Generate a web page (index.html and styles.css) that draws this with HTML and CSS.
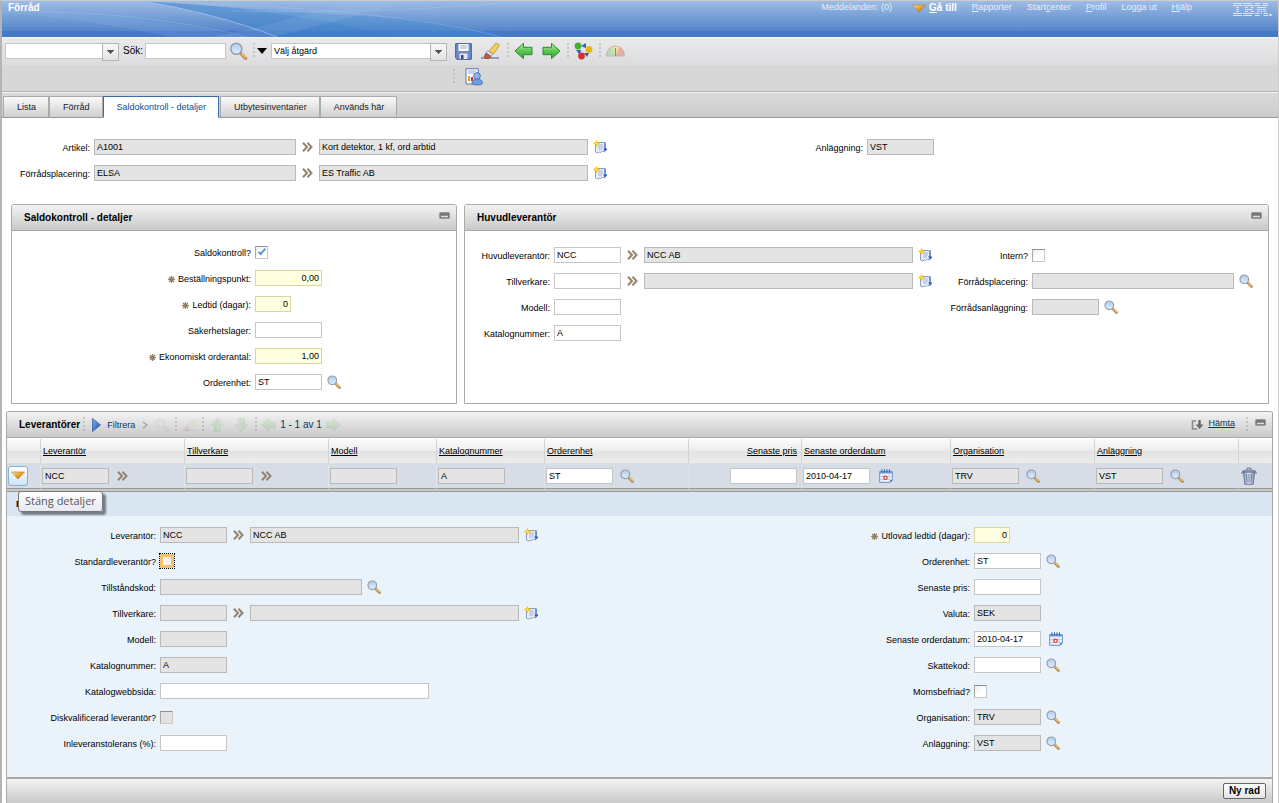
FILE: index.html
```html
<!DOCTYPE html>
<html lang="sv">
<head>
<meta charset="utf-8">
<title>Förråd</title>
<link rel="stylesheet" href="styles.css">
</head>
<body>
<svg class="defs" aria-hidden="true">
  <defs>
    <linearGradient id="g-gold" x1="0" y1="0" x2="1" y2="1"><stop offset="0" stop-color="#fbe3a6"/><stop offset=".5" stop-color="#e9a12c"/><stop offset="1" stop-color="#a9640b"/></linearGradient>
    <linearGradient id="g-green" x1="0" y1="0" x2="0" y2="1"><stop offset="0" stop-color="#b6efa0"/><stop offset=".5" stop-color="#5cc653"/><stop offset="1" stop-color="#37a035"/></linearGradient>
    <linearGradient id="g-lens" x1="0" y1="0" x2="0" y2="1"><stop offset="0" stop-color="#a9cdf2"/><stop offset="1" stop-color="#e2f1fd"/></linearGradient>
    <linearGradient id="g-blue" x1="0" y1="0" x2="1" y2="1"><stop offset="0" stop-color="#7fb0ee"/><stop offset="1" stop-color="#1c4fa6"/></linearGradient>
    <linearGradient id="g-trash" x1="0" y1="0" x2="1" y2="0"><stop offset="0" stop-color="#8d9cba"/><stop offset=".5" stop-color="#dfe6f2"/><stop offset="1" stop-color="#8391b0"/></linearGradient>
  </defs>
  <symbol id="i-chev" viewBox="0 0 11 10"><path d="M1 .8 5 5 1 9.200M5.500.8 9.500 5 5.500 9.200" fill="none" stroke="#93836f" stroke-width="2"/></symbol>
  <symbol id="i-lens" viewBox="0 0 14 14"><path d="m9 9 3.500 3.500" stroke="#a98252" stroke-width="2.600" stroke-linecap="round"/><path d="m9.500 9 3 2.800" stroke="#f3c06c" stroke-width="1.500" stroke-linecap="round"/><circle cx="5.300" cy="5.300" r="4.300" fill="url(#g-lens)" stroke="#9a9fa6" stroke-width="1.200"/></symbol>
  <symbol id="i-list" viewBox="0 0 14 14"><path d="M2.500 2.500h9V12l-2-1L8 12.500 6.500 12l-2 1-2-1z" fill="#e9eefa" stroke="#8b9dc7"/><path d="M5 5h5M5 7h5M5 9h4" stroke="#a3b3d8"/><path d="M12.300 2.500v7" stroke="#5f82c8" stroke-width="1.200"/><path d="M10 8.500h4.500l-2.200 3z" fill="#2f5fc0"/><path d="M3.500 0 4.700 2.300 7 3.500 4.700 4.700 3.500 7 2.300 4.700 0 3.500 2.300 2.300z" fill="#f5c500"/><circle cx="3.500" cy="3.500" r="1" fill="#fff07a"/></symbol>
  <symbol id="i-cal" viewBox="0 0 14 14"><path d="M.7 2.500h12.600V11l-2 2.300H.7z" fill="#f3f7ff" stroke="#6d8cc2"/><path d="M1 2h12v2.500H1z" fill="#6f99d8"/><path d="M3 .3v3M5.500.3v3M8 .3v3M10.500.3v3" stroke="#2f5ea8"/><path d="M1 7.500h12M1 10.500h12M4 4.500V13M10 4.500V13" stroke="#b7c7e4" stroke-width=".8"/><circle cx="6.500" cy="8.800" r="1.700" fill="#fff" stroke="#d43a2a" stroke-width="1.200"/><path d="M13.300 11h-2v2.300z" fill="#3f5f96"/></symbol>
  <symbol id="i-req" viewBox="0 0 7 7"><circle cx="3.500" cy="3.500" r="2.200" fill="#94805f"/><path d="M3.500 0v7M0 3.500h7M1 1l5 5M6 1 1 6" stroke="#94805f" stroke-width="1.100"/></symbol>
  <symbol id="i-min" viewBox="0 0 11 7"><rect x=".5" y=".5" width="10" height="6" rx="1" fill="#777" stroke="#999"/><path d="M2 4.500h7" stroke="#ddd" stroke-width="1.500"/></symbol>
  <symbol id="i-down" viewBox="0 0 14 9"><path d="M.5 1h13L7 8z" fill="url(#g-gold)" stroke="#b7792a" stroke-width=".6"/></symbol>
  <symbol id="i-left" viewBox="0 0 19 17"><path d="M1 8.500 9.500.8v4H18v7.400H9.500v4z" fill="url(#g-green)" stroke="#2b8a2c"/></symbol>
  <symbol id="i-sep" viewBox="0 0 2 16"><path d="M1 0v16" stroke="#a5a5a5" stroke-dasharray="2 2"/></symbol>
  <symbol id="i-save" viewBox="0 0 17 17"><path d="M.7.700h15.600v15.600H2L.7 15z" fill="#6f8cc9" stroke="#3a5596"/><path d="M3.500 1h10v7h-10z" fill="#f7f8fc"/><path d="M5 3h7M5 5h7" stroke="#aab"/><path d="M4.500 10.500h8V16h-8z" fill="#dfe4ee"/><path d="M6 12h2.500v4H6z" fill="#3a4a72"/></symbol>
  <symbol id="i-erase" viewBox="0 0 19 18"><path d="M0 16h18" stroke="#5d6f9c" stroke-width="1.200"/><path d="m8 9 7-8 3.500 2-6 9z" fill="#f5cf4d" stroke="#b08a2b" stroke-width=".7"/><path d="m6.500 8.500 5 3.500-1.500 2.500-5-3.500z" fill="#dde6f5" stroke="#7f93bd" stroke-width=".7"/><path d="m5 11 5 3.500-2 2H4.500L3 15z" fill="#c35a3c" stroke="#8a3a25" stroke-width=".7"/></symbol>
  <symbol id="i-flow" viewBox="0 0 19 18"><path d="m7 4 5-3v5zM2 8h5l-1 5zM10 11l5 0-2 4z" fill="#2f5fae"/><circle cx="4" cy="4" r="3.400" fill="#3faf35"/><circle cx="15" cy="7.500" r="3.400" fill="#e8b90c"/><circle cx="7.500" cy="14" r="3.400" fill="#d4312c"/></symbol>
  <symbol id="i-gauge" viewBox="0 0 19 12"><path d="M.5 11a9 9.500 0 0 1 5-9L9.500 11z" fill="#b9dcb3"/><path d="M5.500 2a9 9 0 0 1 8 0L9.500 11z" fill="#efe2a8"/><path d="M13.500 2a9 9.500 0 0 1 5 9h-9z" fill="#ecaaa6"/><path d="M.5 11a9 10 0 0 1 18 0z" fill="none" stroke="#bcb6ac"/><path d="M9.500 3v8" stroke="#8f8878" stroke-width="1.200"/></symbol>
  <symbol id="i-report" viewBox="0 0 18 18"><path d="M1 .7h12.300V16H1z" fill="#fafbff" stroke="#5c76ad"/><path d="M3 3h8M3 5h6" stroke="#9aa9cc"/><path d="M4 8v5" stroke="#e59b1c" stroke-width="2"/><path d="M7 9v4" stroke="#cf2f2a" stroke-width="2"/><circle cx="12" cy="8" r="3.400" fill="#8eb5e6" stroke="#3f6aa8" stroke-width=".8"/><path d="M7 15.500c0-4 3-4.500 5-4.500s5.500.5 5.500 4.500c-2 2-8.500 2-10.500 0z" fill="#6f9fdb" stroke="#3f6aa8" stroke-width=".8"/></symbol>
  <symbol id="i-play" viewBox="0 0 9 14"><path d="M.5.5v13L8.500 7z" fill="url(#g-blue)" stroke="#2a57a5" stroke-width=".7"/></symbol>
  <symbol id="i-fetch" viewBox="0 0 13 11"><path d="M5 2H1.500v8H6" fill="none" stroke="#8a8a8a" stroke-width="1.600"/><path d="M8.500 1v6" stroke="#686868" stroke-width="2.400"/><path d="M4.800 5.500h7.600L8.600 10z" fill="#686868"/></symbol>
  <symbol id="i-trash" viewBox="0 0 16 18"><path d="M2.500 5h11l-1.300 12.300H3.800z" fill="url(#g-trash)" stroke="#5f6e8e" stroke-width=".9"/><path d="M5.500 7l.5 8.500M8 7v8.500M10.500 7 10 15.500" stroke="#6f7e9e"/><path d="M1 4.800C2 2.500 14 2.500 15 4.800z" fill="#b9c4d9" stroke="#5f6e8e" stroke-width=".9"/><path d="M6 2.800V1.200h4v1.600M1 5v2M15 5v2" fill="none" stroke="#5f6e8e"/></symbol>
  <symbol id="i-ibm" viewBox="0 0 39 14">
    <g stroke="#dce7f6" stroke-width="1">
      <path d="M0 .5h9M0 2.500h9M3 4.500h3M3 6.500h3M3 8.500h3M0 10.500h9M0 12.500h9"/>
      <path d="M10 .5h9M10 2.500h11M12 4.500h3M17.500 4.500h3M12 6.500h8M12 8.500h3M17.500 8.500h3.500M10 10.500h11M10 12.500h9"/>
      <path d="M22 .5h5M30 .5h5M22 2.500h5.500M29.500 2.500H35M24 4.500h9M24 6.500h3M27.500 6.500h2M30 6.500h3M24 8.500h2.500M27.500 8.500h2M30.500 8.500h2.500M22 10.500h4.500M28 10.500h1M30.500 10.500H35M22 12.500h4.500M30.500 12.500H35"/>
    </g>
    <circle cx="37.500" cy="12" r="1.300" fill="#dce7f6"/>
  </symbol>
</svg>

<div class="page">
  <header class="banner">
    <svg class="swoosh" viewBox="0 0 500 36" aria-hidden="true">
      <path d="M138 0C180 6 235 20 275 36H500C460 24 420 18 340 14 270 10 200 4 138 0z" fill="#3f8fd0" opacity=".35"/>
      <path d="M138 0C180 6 235 20 275 36H390C330 18 230 4 138 0z" fill="#3f7cc6" opacity=".3"/>
      <path d="M0 12C100 12 180 22 240 36H170C110 24 60 16 0 12z" fill="#8ab4e6" opacity=".2"/>
      <path d="M210 36C270 24 310 12 345 0h60C360 14 310 26 270 36z" fill="#a6c8ee" opacity=".15"/>
      <path d="M138 0C180 6 235 20 275 36" fill="none" stroke="#b4d2f3" opacity=".6"/>
      <path d="M138 0C250 4 400 10 500 36M0 11C100 9 180 20 245 36M230 10C320 12 400 10 500 2" fill="none" stroke="#a9cdf2" opacity=".3"/>
    </svg>
    <h1 class="app-title">Förråd</h1>
    <nav class="nav">
      <span class="messages">Meddelanden: (0)</span>
      <a class="goto" href="#"><svg class="i-14x9"><use href="#i-down"/></svg><span><u>G</u>å till</span></a>
      <a href="#"><u>R</u>apporter</a>
      <a href="#">Start<u>c</u>enter</a>
      <a href="#"><u>P</u>rofil</a>
      <a href="#">Logga ut</a>
      <a href="#"><u>H</u>jälp</a>
      <svg class="ibm" role="img" aria-label="IBM"><use href="#i-ibm"/></svg>
    </nav>
  </header>

  <div class="toolbar">
    <div class="tool-row">
      <span class="combo combo-query"><select aria-label="Fråga"><option></option></select></span>
      <label class="search-label" for="search">Sök:</label>
      <input class="field search" id="search" type="text">
      <button class="tool lens" aria-label="Sök"><svg class="i-19"><use href="#i-lens"/></svg></button>
      <svg class="sep"><use href="#i-sep"/></svg>
      <button class="tool caret" aria-label="Sökmeny"></button>
      <span class="combo combo-action"><select aria-label="Åtgärd"><option>Välj åtgärd</option></select></span>
      <button class="tool save" aria-label="Spara"><svg class="i-17"><use href="#i-save"/></svg></button>
      <button class="tool erase" aria-label="Rensa"><svg class="i-19"><use href="#i-erase"/></svg></button>
      <svg class="sep"><use href="#i-sep"/></svg>
      <button class="tool" aria-label="Föregående"><svg class="i-19"><use href="#i-left"/></svg></button>
      <button class="tool next" aria-label="Nästa"><svg class="i-19 flip"><use href="#i-left"/></svg></button>
      <svg class="sep"><use href="#i-sep"/></svg>
      <button class="tool" aria-label="Arbetsflöde"><svg class="i-19"><use href="#i-flow"/></svg></button>
      <svg class="sep"><use href="#i-sep"/></svg>
      <button class="tool" aria-label="Nyckeltal"><svg class="i-19"><use href="#i-gauge"/></svg></button>
    </div>
    <div class="tool-row second">
      <svg class="sep"><use href="#i-sep"/></svg>
      <button class="tool" aria-label="Rapporter"><svg class="i-18"><use href="#i-report"/></svg></button>
    </div>
  </div>

  <div class="tabs" role="tablist">
    <button class="tab" role="tab">Lista</button>
    <button class="tab" role="tab">Förråd</button>
    <button class="tab active" role="tab" aria-selected="true">Saldokontroll - detaljer</button>
    <button class="tab" role="tab">Utbytesinventarier</button>
    <button class="tab" role="tab">Används här</button>
  </div>

  <main>
    <section class="head-form">
      <div class="form head-left">
        <div class="row"><label for="artikel">Artikel:</label>
          <div class="ctl"><input class="field md ro" id="artikel" value="A1001" readonly><button class="chev" aria-label="Detaljer"><svg><use href="#i-chev"/></svg></button><input class="field lg ro" aria-label="Artikelbeskrivning" value="Kort detektor, 1 kf, ord arbtid" readonly><button class="ico" aria-label="Lång beskrivning"><svg><use href="#i-list"/></svg></button></div></div>
        <div class="row"><label for="placering">Förrådsplacering:</label>
          <div class="ctl"><input class="field md ro" id="placering" value="ELSA" readonly><button class="chev" aria-label="Detaljer"><svg><use href="#i-chev"/></svg></button><input class="field lg ro" aria-label="Placeringsbeskrivning" value="ES Traffic AB" readonly><button class="ico" aria-label="Lång beskrivning"><svg><use href="#i-list"/></svg></button></div></div>
      </div>
      <div class="form head-right">
        <div class="row"><label for="anl">Anläggning:</label><div class="ctl"><input class="field sm ro" id="anl" value="VST" readonly></div></div>
      </div>
    </section>

    <div class="panels">
      <section class="panel">
        <div class="panel-head"><h2>Saldokontroll - detaljer</h2><button class="min" aria-label="Minimera"><svg><use href="#i-min"/></svg></button></div>
        <div class="form balance">
          <div class="row"><label for="saldo">Saldokontroll?</label><div class="ctl"><input class="check" type="checkbox" id="saldo" checked></div></div>
          <div class="row"><label for="bp"><svg class="req"><use href="#i-req"/></svg>Beställningspunkt:</label><div class="ctl"><input class="field sm must" id="bp" value="0,00"></div></div>
          <div class="row"><label for="lt"><svg class="req"><use href="#i-req"/></svg>Ledtid (dagar):</label><div class="ctl"><input class="field xs must" id="lt" value="0"></div></div>
          <div class="row"><label for="sl">Säkerhetslager:</label><div class="ctl"><input class="field sm" id="sl"></div></div>
          <div class="row"><label for="eo"><svg class="req"><use href="#i-req"/></svg>Ekonomiskt orderantal:</label><div class="ctl"><input class="field sm must" id="eo" value="1,00"></div></div>
          <div class="row"><label for="oe">Orderenhet:</label><div class="ctl"><input class="field sm" id="oe" value="ST"><button class="ico" aria-label="Välj värde"><svg><use href="#i-lens"/></svg></button></div></div>
        </div>
      </section>
      <section class="panel">
        <div class="panel-head"><h2>Huvudleverantör</h2><button class="min" aria-label="Minimera"><svg><use href="#i-min"/></svg></button></div>
        <div class="supplier">
          <div class="form sup-left">
            <div class="row"><label for="hl">Huvudleverantör:</label><div class="ctl"><input class="field sm" id="hl" value="NCC"><button class="chev" aria-label="Detaljer"><svg><use href="#i-chev"/></svg></button><input class="field lg ro" aria-label="Leverantörsnamn" value="NCC AB" readonly><button class="ico" aria-label="Lång beskrivning"><svg><use href="#i-list"/></svg></button></div></div>
            <div class="row"><label for="tv">Tillverkare:</label><div class="ctl"><input class="field sm" id="tv"><button class="chev" aria-label="Detaljer"><svg><use href="#i-chev"/></svg></button><input class="field lg ro" aria-label="Tillverkarnamn" readonly><button class="ico" aria-label="Lång beskrivning"><svg><use href="#i-list"/></svg></button></div></div>
            <div class="row"><label for="mo">Modell:</label><div class="ctl"><input class="field sm" id="mo"></div></div>
            <div class="row"><label for="kn">Katalognummer:</label><div class="ctl"><input class="field sm" id="kn" value="A"></div></div>
          </div>
          <div class="form sup-right">
            <div class="row"><label for="intern">Intern?</label><div class="ctl"><input class="check" type="checkbox" id="intern"></div></div>
            <div class="row"><label for="fp">Förrådsplacering:</label><div class="ctl"><input class="field md ro" id="fp" readonly><button class="ico" aria-label="Välj värde"><svg><use href="#i-lens"/></svg></button></div></div>
            <div class="row"><label for="fa">Förrådsanläggning:</label><div class="ctl"><input class="field sm ro" id="fa" readonly><button class="ico" aria-label="Välj värde"><svg><use href="#i-lens"/></svg></button></div></div>
          </div>
        </div>
      </section>
    </div>

    <section class="vendors">
      <div class="panel-head vendors-head">
        <h2>Leverantörer</h2>
        <svg class="sep"><use href="#i-sep"/></svg>
        <button class="filter"><svg class="play"><use href="#i-play"/></svg>Filtrera</button>
        <svg class="mini-chev" viewBox="0 0 6 8"><path d="m1 1 4 3-4 3" fill="none" stroke="#a9a698" stroke-width="1.500"/></svg>
        <button class="faint" disabled aria-label="Sök"><svg><use href="#i-lens"/></svg></button>
        <svg class="sep"><use href="#i-sep"/></svg>
        <button class="faint" disabled aria-label="Rensa"><svg><use href="#i-erase"/></svg></button>
        <svg class="sep"><use href="#i-sep"/></svg>
        <button class="faint up" disabled aria-label="Föregående rad"><svg><use href="#i-left"/></svg></button>
        <button class="faint down" disabled aria-label="Nästa rad"><svg><use href="#i-left"/></svg></button>
        <svg class="sep"><use href="#i-sep"/></svg>
        <button class="faint page-btn" disabled aria-label="Föregående sida"><svg><use href="#i-left"/></svg></button>
        <span class="count">1 - 1 av 1</span>
        <button class="faint page-btn" disabled aria-label="Nästa sida"><svg class="flip"><use href="#i-left"/></svg></button>
        <span class="grow"></span>
        <a class="fetch" href="#"><svg><use href="#i-fetch"/></svg><u>Hämta</u></a>
        <svg class="sep"><use href="#i-sep"/></svg>
        <button class="min" aria-label="Minimera"><svg><use href="#i-min"/></svg></button>
      </div>
      <table class="grid">
        <colgroup><col class="c33"><col class="c144"><col class="c144"><col class="c108"><col class="c108"><col class="c144"><col class="c113"><col class="c149"><col class="c144"><col class="c144"><col class="c34"></colgroup>
        <thead><tr><th></th><th><a href="#">Leverantör</a></th><th><a href="#">Tillverkare</a></th><th><a href="#">Modell</a></th><th><a href="#">Katalognummer</a></th><th><a href="#">Orderenhet</a></th><th class="num"><a href="#">Senaste pris</a></th><th><a href="#">Senaste orderdatum</a></th><th><a href="#">Organisation</a></th><th><a href="#">Anläggning</a></th><th></th></tr></thead>
        <tbody><tr>
          <td class="toggle-cell"><div class="toggle-wrap"><button class="toggle" aria-label="Stäng detaljer"><svg class="i-14x9"><use href="#i-down"/></svg></button><div class="tooltip" role="tooltip">Stäng detaljer</div></div></td>
          <td><div class="ctl"><input class="field sm ro" aria-label="Leverantör" value="NCC" readonly><button class="chev" aria-label="Detaljer"><svg><use href="#i-chev"/></svg></button></div></td>
          <td><div class="ctl"><input class="field sm ro" aria-label="Tillverkare" readonly><button class="chev" aria-label="Detaljer"><svg><use href="#i-chev"/></svg></button></div></td>
          <td><div class="ctl"><input class="field sm ro" aria-label="Modell" readonly></div></td>
          <td><div class="ctl"><input class="field sm ro" aria-label="Katalognummer" value="A" readonly></div></td>
          <td><div class="ctl"><input class="field sm" aria-label="Orderenhet" value="ST"><button class="ico" aria-label="Välj värde"><svg><use href="#i-lens"/></svg></button></div></td>
          <td><div class="ctl end"><input class="field sm" aria-label="Senaste pris"></div></td>
          <td><div class="ctl"><input class="field sm" aria-label="Senaste orderdatum" value="2010-04-17"><button class="ico cal" aria-label="Välj datum"><svg><use href="#i-cal"/></svg></button></div></td>
          <td><div class="ctl"><input class="field sm ro" aria-label="Organisation" value="TRV" readonly><button class="ico" aria-label="Välj värde"><svg><use href="#i-lens"/></svg></button></div></td>
          <td><div class="ctl"><input class="field sm ro" aria-label="Anläggning" value="VST" readonly><button class="ico" aria-label="Välj värde"><svg><use href="#i-lens"/></svg></button></div></td>
          <td><button class="trash" aria-label="Ta bort rad"><svg><use href="#i-trash"/></svg></button></td>
        </tr></tbody>
      </table>
      <div class="detail">
        <h3>Detaljer</h3>
        <div class="detail-cols">
          <div class="form det-left">
            <div class="row"><label for="d1">Leverantör:</label><div class="ctl"><input class="field sm ro" id="d1" value="NCC" readonly><button class="chev" aria-label="Detaljer"><svg><use href="#i-chev"/></svg></button><input class="field lg ro" aria-label="Leverantörsnamn" value="NCC AB" readonly><button class="ico" aria-label="Lång beskrivning"><svg><use href="#i-list"/></svg></button></div></div>
            <div class="row"><label for="d2">Standardleverantör?</label><div class="ctl"><input class="check hot" type="checkbox" id="d2"></div></div>
            <div class="row"><label for="d3">Tillståndskod:</label><div class="ctl"><input class="field md ro" id="d3" readonly><button class="ico" aria-label="Välj värde"><svg><use href="#i-lens"/></svg></button></div></div>
            <div class="row"><label for="d4">Tillverkare:</label><div class="ctl"><input class="field sm ro" id="d4" readonly><button class="chev" aria-label="Detaljer"><svg><use href="#i-chev"/></svg></button><input class="field lg ro" aria-label="Tillverkarnamn" readonly><button class="ico" aria-label="Lång beskrivning"><svg><use href="#i-list"/></svg></button></div></div>
            <div class="row"><label for="d5">Modell:</label><div class="ctl"><input class="field sm ro" id="d5" readonly></div></div>
            <div class="row"><label for="d6">Katalognummer:</label><div class="ctl"><input class="field sm ro" id="d6" value="A" readonly></div></div>
            <div class="row"><label for="d7">Katalogwebbsida:</label><div class="ctl"><input class="field lg" id="d7"></div></div>
            <div class="row"><label for="d8">Diskvalificerad leverantör?</label><div class="ctl"><input class="check off" type="checkbox" id="d8" disabled></div></div>
            <div class="row"><label for="d9">Inleveranstolerans (%):</label><div class="ctl"><input class="field sm" id="d9"></div></div>
          </div>
          <div class="form det-right">
            <div class="row"><label for="e1"><svg class="req"><use href="#i-req"/></svg>Utlovad ledtid (dagar):</label><div class="ctl"><input class="field xs must" id="e1" value="0"></div></div>
            <div class="row"><label for="e2">Orderenhet:</label><div class="ctl"><input class="field sm" id="e2" value="ST"><button class="ico" aria-label="Välj värde"><svg><use href="#i-lens"/></svg></button></div></div>
            <div class="row"><label for="e3">Senaste pris:</label><div class="ctl"><input class="field sm" id="e3"></div></div>
            <div class="row"><label for="e4">Valuta:</label><div class="ctl"><input class="field sm ro" id="e4" value="SEK" readonly></div></div>
            <div class="row"><label for="e5">Senaste orderdatum:</label><div class="ctl"><input class="field sm" id="e5" value="2010-04-17"><button class="ico cal" aria-label="Välj datum"><svg><use href="#i-cal"/></svg></button></div></div>
            <div class="row"><label for="e6">Skattekod:</label><div class="ctl"><input class="field sm" id="e6"><button class="ico" aria-label="Välj värde"><svg><use href="#i-lens"/></svg></button></div></div>
            <div class="row"><label for="e7">Momsbefriad?</label><div class="ctl"><input class="check" type="checkbox" id="e7"></div></div>
            <div class="row"><label for="e8">Organisation:</label><div class="ctl"><input class="field sm ro" id="e8" value="TRV" readonly><button class="ico" aria-label="Välj värde"><svg><use href="#i-lens"/></svg></button></div></div>
            <div class="row"><label for="e9">Anläggning:</label><div class="ctl"><input class="field sm ro" id="e9" value="VST" readonly><button class="ico" aria-label="Välj värde"><svg><use href="#i-lens"/></svg></button></div></div>
          </div>
        </div>
      </div>
      <div class="vendors-foot"><button class="new-row">Ny rad</button></div>
    </section>
  </main>
</div>
</body>
</html>
```
FILE: styles.css
```css
* { box-sizing: border-box; }
body, h1, h2, h3 { margin: 0; }
body, input, select, button {
  font-family: "Liberation Sans", Arial, sans-serif;
  font-size: 9px;
  line-height: 12px;
  color: #000;
}
body { background: #fff; }
button { padding: 0; border: 0; background: none; flex: none; }
svg { display: block; flex: none; overflow: visible; }
.defs { position: absolute; width: 0; height: 0; }
.page {
  display: flex;
  flex-direction: column;
  min-height: 100vh;
  border: solid #ccc;
  border-width: 1px 1px 0 2px;
  border-left-color: #b4b4b4;
}
.flip { transform: scaleX(-1); }
.i-14x9 { width: 14px; height: 9px; }
.i-17 { width: 17px; height: 17px; }
.i-18 { width: 18px; height: 18px; }
.i-19 { width: 19px; height: 18px; }
.sep { width: 2px; height: 16px; }

/* Banner */
.banner {
  position: relative;
  display: flex;
  justify-content: space-between;
  align-items: flex-start;
  height: 36px;
  padding: 0 6px;
  overflow: hidden;
  background: linear-gradient(#9dbce5 0, #5585c9 30px, #4678c8 30px, #4678c8 36px);
}
.swoosh { position: absolute; left: 0; top: 0; width: 500px; height: 36px; }
.app-title { position: relative; font-size: 10px; line-height: 14px; color: #fff; }
.nav { display: flex; gap: 15px; line-height: 12px; color: #e6eefa; }
.nav a { color: #e6eefa; text-decoration: none; }
.messages { margin-right: 5px; }
.nav .goto { display: flex; gap: 3px; font-size: 10px; line-height: 14px; font-weight: bold; color: #fff; }
.nav .goto svg { margin-top: 3px; }
.ibm { width: 39px; height: 14px; margin: 2px 0 0 26px; }

/* Toolbar */
.toolbar {
  padding-bottom: 1px;
  border-top: 1px solid #f6f6f8;
  border-bottom: 1px solid #b4b4b4;
  background: linear-gradient(#eaeaec 0, #dcdcde 27px, #d7d7d7 27px);
}
.tool-row { display: flex; align-items: center; height: 26px; padding-left: 3px; }
.tool-row.second { padding-left: 451px; gap: 5px; }
.combo { position: relative; display: flex; height: 16px; }
.combo select {
  appearance: none;
  width: 100%;
  padding: 0 16px 0 2px;
  border: 1px solid #c6c6c6;
  border-radius: 0;
  background: #fff;
}
.combo::after {
  content: "";
  position: absolute;
  right: 0;
  top: 0;
  width: 15px;
  height: 16px;
  border: 1px solid #b5b5b5;
  background: conic-gradient(from 315deg at 50% 100%, #555 90deg, transparent 0) center / 7px 4px no-repeat, linear-gradient(#f8f8f8, #e2e2e2);
  pointer-events: none;
}
.combo-query { width: 114px; }
.combo-action { width: 176px; margin-left: 4px; }
.search-label { margin: 0 2px 0 4px; font-size: 10px; }
.field.search { width: 81px; }
.tool.lens { margin: 0 5px 0 3px; }
.tool.caret { margin-left: 2px; border: solid transparent; border-width: 6px 5px 0; border-top-color: #000; }
.tool.save { margin: 0 9px 0 8px; }
.tool.erase { margin-right: 7px; }
.tool-row .sep + .tool:not(.caret) { margin: 0 6px 0 5px; }
.tool.next { margin: 0 6px 0 3px; }

/* Tabs */
.tabs {
  display: flex;
  align-items: flex-end;
  height: 26px;
  padding: 0 1px;
  border-top: 1px solid #f4f4f4;
  background: linear-gradient(#dadada, #cbcbcb);
  box-shadow: inset 0 -1px #999;
}
.tab {
  height: 22px;
  padding: 0 12px 0 13px;
  border: 1px solid #aaa;
  border-bottom-color: #999;
  background: linear-gradient(#fafafa, #e0e0e0 60%, #cfcfcf);
  color: #222;
}
.tab.active { margin-right: 1px; border-color: #3c6aa8 #3c6aa8 #fff; background: #fff; color: #0d4c94; }

/* Form rows */
.form { --label: 89px; }
.row { display: grid; grid-template-columns: var(--label) 1fr; column-gap: 4px; align-items: center; height: 26px; }
.row > label { display: flex; justify-content: flex-end; align-items: center; gap: 3px; padding-top: 2px; white-space: nowrap; }
.req { width: 7px; height: 7px; }
.ctl { display: flex; align-items: center; }
.field { height: 16px; padding: 0 2px; border: 1px solid #c6c6c6; border-radius: 0; background: #fff; outline: 0; flex: none; }
.xs { width: 36px; }
.sm { width: 67px; }
.md { width: 202px; }
.lg { width: 269px; }
.ro { border-color: #b9b9b9; background: #e4e4e4; }
.must { border-color: #d8d89c; background: #ffffe2; text-align: right; }
.chev { margin: 0 6px; }
.chev svg { width: 11px; height: 10px; }
.ico { margin-left: 5px; }
.ico svg { width: 14px; height: 14px; }
.ico.cal { margin-left: 8px; }
.check {
  appearance: none;
  display: grid;
  place-items: center;
  width: 13px;
  height: 13px;
  margin: 0;
  border: 1px solid #c8c8c8;
  border-top-color: #8e8f8f;
  border-left-color: #a8a8a8;
  background: linear-gradient(135deg, #eee, #fff 60%);
}
.check:checked::after { content: ""; width: 4px; height: 8px; margin-bottom: 2px; border: solid #5c93e0; border-width: 0 2px 2px 0; box-sizing: border-box; transform: rotate(40deg); }
.check.hot { width: 14px; height: 14px; border: 3px solid #f5c36a; background: #f4f4ec; outline: 1px dotted #000; }
.check.off { background: #e2e2e2; }

main { display: flex; flex-direction: column; flex: 1; }
.head-form { display: grid; grid-template-columns: 776fr 500fr; padding-top: 16px; }
.head-left { --label: 88px; }
.head-right { --label: 85px; }

/* Panels */
.panels { display: grid; grid-template-columns: 446fr 805fr; gap: 7px; padding: 18px 9px 0; }
.panel { min-height: 200px; border: 1px solid #aaa; border-radius: 3px 3px 0 0; }
.panel-head {
  display: flex;
  justify-content: space-between;
  align-items: center;
  height: 26px;
  padding: 0 5px 0 12px;
  border-bottom: 1px solid #aaa;
  border-radius: 2px 2px 0 0;
  background: linear-gradient(#f3f3f3, #c9c9c9);
}
.panel-head h2 { font-size: 10px; line-height: 12px; }
.min { padding: 0 1px 4px; }
.min svg { width: 11px; height: 7px; }
.balance { --label: 239px; padding-top: 8px; }
.supplier { display: grid; grid-template-columns: 475fr 328fr; padding-top: 11px; }
.sup-left { --label: 85px; }
.sup-right { --label: 88px; }

/* Vendor table */
.vendors { display: flex; flex-direction: column; flex: 1; margin: 7px 5px 0 4px; border: 1px solid #aaa; border-bottom: 0; border-radius: 3px 3px 0 0; }
.vendors-head { justify-content: flex-start; gap: 3px; }
.filter, .fetch { display: flex; align-items: center; gap: 6px; color: #0b3766; }
.filter { margin-left: 4px; }
.play { width: 9px; height: 14px; }
.mini-chev { width: 6px; height: 8px; margin: 0 2px 0 4px; }
.faint { margin: 0 2px; opacity: .16; }
.faint svg { width: 15px; height: 14px; }
.up svg { transform: rotate(90deg); }
.down svg { transform: rotate(270deg); }
.up, .down { margin: 0 3px; }
.page-btn { margin: 0 1px; }
.count { font-size: 10px; color: #0b3766; white-space: nowrap; }
.grow { flex: 1; }
.fetch { gap: 4px; padding-bottom: 4px; margin-right: 8px; }
.vendors-head .min { margin-left: 3px; }
.fetch svg { width: 13px; height: 11px; margin-top: 3px; }
.grid { width: 100%; table-layout: fixed; border-collapse: separate; border-spacing: 0; border-top: 1px solid #fff; }
.c33 { width: 33px; }
.c34 { width: 34px; }
.c108 { width: 108px; }
.c113 { width: 113px; }
.c144 { width: 144px; }
.c149 { width: 149px; }
.grid th, .grid td { height: 24px; padding: 0 2px; border-left: 1px solid #d4d4d4; text-align: left; font-weight: normal; }
.grid th:first-child, .grid td:first-child { border-left: 0; }
.grid th { background: linear-gradient(#fcfcfc, #ececec 50%, #e2e2e2 50%, #ededed); }
.grid th a { color: #000; }
.grid td { height: 26px; padding: 0 1px; border-color: #dde0e6; border-bottom: 1px solid #999; background: #d6dde6; }
.grid .num { text-align: right; padding-right: 4px; }
.end { justify-content: flex-end; padding-right: 3px; }
.grid .chev { margin-left: 8px; }
.grid .ico { margin-left: 7px; }
.grid .ico.cal { margin-left: 9px; }
.toggle-wrap { position: relative; }
.toggle { display: grid; place-items: center; width: 20px; height: 20px; border: 1px solid #7fb2dc; border-radius: 3px; background: linear-gradient(#fff, #cfe4f5); }
.tooltip {
  position: absolute;
  z-index: 2;
  left: 10px;
  top: 25px;
  padding: 1px 6px 2px;
  border: 1px solid #767676;
  border-radius: 3px;
  background: linear-gradient(#fff, #e6e7f1);
  box-shadow: 3px 3px 2px rgba(0, 0, 0, .45);
  font-family: "Open Sans", "Noto Sans", sans-serif;
  font-size: 11px;
  line-height: 16px;
  color: #555;
  white-space: nowrap;
}
.trash { display: block; margin-left: 1px; }
.trash svg { width: 16px; height: 18px; }
.detail { background: #eaf2fa; border-top: 2px solid #c8c8c8; }
.detail h3 { height: 25px; padding-left: 9px; border-top: 1px solid #999; font-size: 9px; line-height: 24px; background: #d9e5f1; }
.detail-cols { display: grid; grid-template-columns: 807fr 458fr; padding: 6px 0 21px; }
.det-left { --label: 149px; }
.det-right { --label: 156px; }
.vendors-foot {
  display: flex;
  justify-content: flex-end;
  align-items: flex-start;
  flex: 1;
  min-height: 25px;
  padding: 4px 6px 0;
  border-top: 2px solid #a8a8a8;
  background: linear-gradient(#f3f3f3, #c9c9c9);
}
.new-row { height: 16px; padding: 0 5px; border: 1px solid #666; border-radius: 2px; background: linear-gradient(#fff, #e4e4e4); font-size: 10px; font-weight: bold; }
```
